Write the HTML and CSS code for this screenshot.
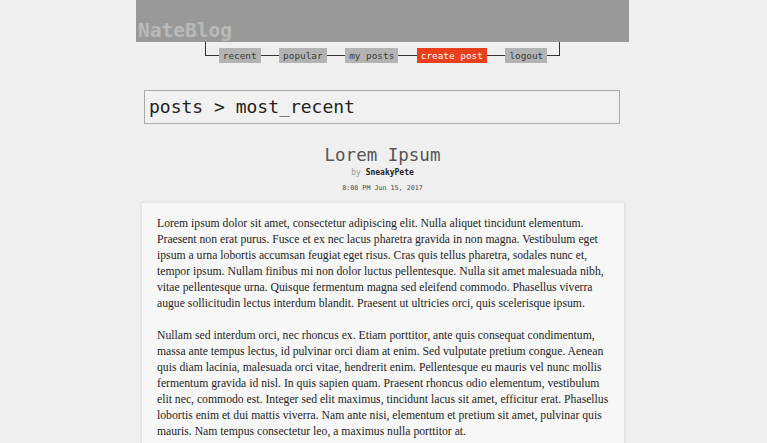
FILE: index.html
```html
<!DOCTYPE html>
<html>
<head>
<meta charset="utf-8">
<link rel="stylesheet" href="styles.css">
</head>
<body>
<div class="page">
  <header class="masthead"><h1 class="logo">NateBlog</h1></header>
  <nav class="nav">
    <a class="nav-item">recent</a>
    <a class="nav-item">popular</a>
    <a class="nav-item">my posts</a>
    <a class="nav-item nav-item--active">create post</a>
    <a class="nav-item">logout</a>
  </nav>
  <div class="crumb">posts &gt; most_recent</div>
  <article class="post">
    <h2 class="post-title">Lorem Ipsum</h2>
    <div class="byline">by <span class="author">SneakyPete</span></div>
    <div class="date">8:08 PM Jun 15, 2017</div>
    <div class="card">
      <p class="para">
        <span class="ln">Lorem ipsum dolor sit amet, consectetur adipiscing elit. Nulla aliquet tincidunt elementum.</span>
        <span class="ln">Praesent non erat purus. Fusce et ex nec lacus pharetra gravida in non magna. Vestibulum eget</span>
        <span class="ln">ipsum a urna lobortis accumsan feugiat eget risus. Cras quis tellus pharetra, sodales nunc et,</span>
        <span class="ln">tempor ipsum. Nullam finibus mi non dolor luctus pellentesque. Nulla sit amet malesuada nibh,</span>
        <span class="ln">vitae pellentesque urna. Quisque fermentum magna sed eleifend commodo. Phasellus viverra</span>
        <span class="ln">augue sollicitudin lectus interdum blandit. Praesent ut ultricies orci, quis scelerisque ipsum.</span>
      </p>
      <p class="para">
        <span class="ln">Nullam sed interdum orci, nec rhoncus ex. Etiam porttitor, ante quis consequat condimentum,</span>
        <span class="ln">massa ante tempus lectus, id pulvinar orci diam at enim. Sed vulputate pretium congue. Aenean</span>
        <span class="ln">quis diam lacinia, malesuada orci vitae, hendrerit enim. Pellentesque eu mauris vel nunc mollis</span>
        <span class="ln">fermentum gravida id nisl. In quis sapien quam. Praesent rhoncus odio elementum, vestibulum</span>
        <span class="ln">elit nec, commodo est. Integer sed elit maximus, tincidunt lacus sit amet, efficitur erat. Phasellus</span>
        <span class="ln">lobortis enim et dui mattis viverra. Nam ante nisi, elementum et pretium sit amet, pulvinar quis</span>
        <span class="ln">mauris. Nam tempus consectetur leo, a maximus nulla porttitor at.</span>
      </p>
    </div>
  </article>
</div>
</body>
</html>
```
FILE: styles.css
```css
html, body {
  margin: 0;
  padding: 0;
  background: #efefef;
}
.page {
  width: 493px;
  margin: 0 0 0 calc(50% - 247.5px);
  font-family: "DejaVu Sans Mono", monospace;
}
.masthead {
  height: 42px;
  background: #999999;
  display: flex;
  align-items: flex-end;
}
.logo {
  margin: 0 0 2px 2px;
  font-size: 19.5px;
  line-height: 1;
  font-weight: bold;
  color: #b9b9b9;
}
.nav {
  display: flex;
  width: fit-content;
  margin: 0 auto;
  height: 13px;
  padding: 0 12px 0 13px;
  gap: 18.5px;
  align-items: flex-start;
  border: 1px solid #333;
  border-top: none;
}
.nav-item {
  margin-top: 6px;
  height: 15px;
  line-height: 15px;
  padding: 0 4px;
  background: #b3b3b3;
  color: #3a3a3a;
  font-size: 9.4px;
  white-space: nowrap;
}
.nav-item--active {
  background: #e8401c;
  color: #fff;
}
.crumb {
  margin: 34px 0 0 8px;
  width: 470px;
  height: 32px;
  border: 1px solid #aaaaaa;
  padding-left: 4px;
  font-size: 18px;
  line-height: 32px;
  color: #222;
  background: #f1f1f1;
}
.post {
  margin-top: 20px;
  text-align: center;
}
.post-title {
  margin: 0;
  font-size: 17.5px;
  line-height: 22px;
  font-weight: normal;
  color: #555;
}
.byline {
  margin-top: 1px;
  font-size: 8px;
  line-height: 12px;
  color: #999;
}
.author {
  color: #222;
  font-weight: bold;
}
.date {
  margin-top: 4px;
  font-size: 6.7px;
  line-height: 10px;
  color: #444;
}
.card {
  margin: 9px 0 0 5px;
  width: 452px;
  padding: 13px 15px 20px;
  border: 1px solid #e2e2e2;
  background: #f7f7f7;
  box-shadow: 0 0 2px rgba(0,0,0,0.08);
  text-align: left;
  font-family: "Liberation Serif", serif;
  font-size: 11.7px;
  line-height: 16px;
  color: #1e1e1e;
}
.para {
  margin: 0 0 16px;
}
.ln {
  display: block;
  white-space: nowrap;
}
```
